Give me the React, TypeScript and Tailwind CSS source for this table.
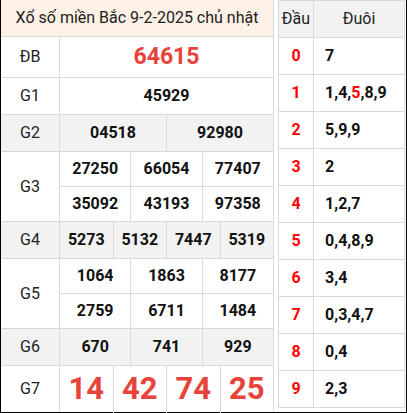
const prizes: { label: string; rows: string[][]; h: string; gray?: boolean; big?: 'db' | 'g7' }[] = [
  { label: 'ĐB', rows: [['64615']], h: 'h-[41px]', big: 'db' },
  { label: 'G1', rows: [['45929']], h: 'h-[37px]' },
  { label: 'G2', rows: [['04518', '92980']], h: 'h-[37px]', gray: true },
  { label: 'G3', rows: [['27250', '66054', '77407'], ['35092', '43193', '97358']], h: 'h-[70px]' },
  { label: 'G4', rows: [['5273', '5132', '7447', '5319']], h: 'h-[37px]', gray: true },
  { label: 'G5', rows: [['1064', '1863', '8177'], ['2759', '6711', '1484']], h: 'h-[70px]' },
  { label: 'G6', rows: [['670', '741', '929']], h: 'h-[37px]', gray: true },
  { label: 'G7', rows: [['14', '42', '74', '25']], h: 'h-[46px]', big: 'g7' },
]

const loto: [string, string[]][] = [
  ['0', ['7']],
  ['1', ['1', '4', '5', '8', '9']],
  ['2', ['5', '9', '9']],
  ['3', ['2']],
  ['4', ['1', '2', '7']],
  ['5', ['0', '4', '8', '9']],
  ['6', ['3', '4']],
  ['7', ['0', '3', '4', '7']],
  ['8', ['0', '4']],
  ['9', ['2', '3']],
]

function numClass(big?: 'db' | 'g7') {
  if (big === 'db') return 'text-[23px] font-bold text-[#e8433b]'
  if (big === 'g7') return 'text-[31px] font-bold text-[#e8433b]'
  return 'text-[16px] font-bold text-[#111]'
}

export default function App() {
  return (
    <div className="w-[407px] h-[413px] bg-white border-l border-r border-b border-black flex gap-[4px] text-[#222] font-['Roboto',sans-serif]">
      {/* kết quả */}
      <div className="w-[273px] flex flex-col border-r border-[#dadada]">
        <div className="h-[37px] shrink-0 bg-[#fdf1e6] border-b border-[#dadada] flex items-center justify-center text-[16px]">
          Xổ số miền Bắc 9-2-2025 chủ nhật
        </div>
        {prizes.map((p, i) => (
          <div
            key={p.label}
            className={`${p.h} shrink-0 flex ${i < prizes.length - 1 ? 'border-b border-[#dadada]' : ''} ${p.gray ? 'bg-[#f2f2f2]' : ''}`}
          >
            <div className="w-[59px] shrink-0 border-r border-[#dadada] flex items-center justify-center text-[16px]">
              {p.label}
            </div>
            <div className="flex-1 flex flex-col">
              {p.rows.map((r, ri) => (
                <div key={ri} className={`flex-1 flex ${ri < p.rows.length - 1 ? 'border-b border-[#dadada]' : ''}`}>
                  {r.map((n, ni) => (
                    <div
                      key={ni}
                      className={`flex-1 flex items-center justify-center ${numClass(p.big)} ${ni < r.length - 1 ? 'border-r border-[#dadada]' : ''}`}
                    >
                      {n}
                    </div>
                  ))}
                </div>
              ))}
            </div>
          </div>
        ))}
      </div>

      {/* lô tô */}
      <div className="w-[127px] h-[408px] border border-[#dadada] flex flex-col">
        <div className="h-[37px] shrink-0 flex bg-[#f2f2f2] border-b border-[#dadada] text-[16px]">
          <div className="w-[35px] border-r border-[#dadada] flex items-center justify-center">Đầu</div>
          <div className="flex-1 flex items-center justify-center">Đuôi</div>
        </div>
        {loto.map(([d, tails], i) => (
          <div key={d} className={`flex-1 flex ${i < loto.length - 1 ? 'border-b border-[#dadada]' : ''}`}>
            <div className="w-[35px] border-r border-[#dadada] flex items-center justify-center text-[16px] font-bold text-[#ff0000]">
              {d}
            </div>
            <div className="flex-1 flex items-center pl-[11px] text-[16px] font-bold text-[#111]">
              {tails.map((t, ti) => (
                <span key={ti}>
                  <span className={d === '1' && t === '5' ? 'text-[#ff0000]' : ''}>{t}</span>
                  {ti < tails.length - 1 ? ',' : ''}
                </span>
              ))}
            </div>
          </div>
        ))}
      </div>
    </div>
  )
}
